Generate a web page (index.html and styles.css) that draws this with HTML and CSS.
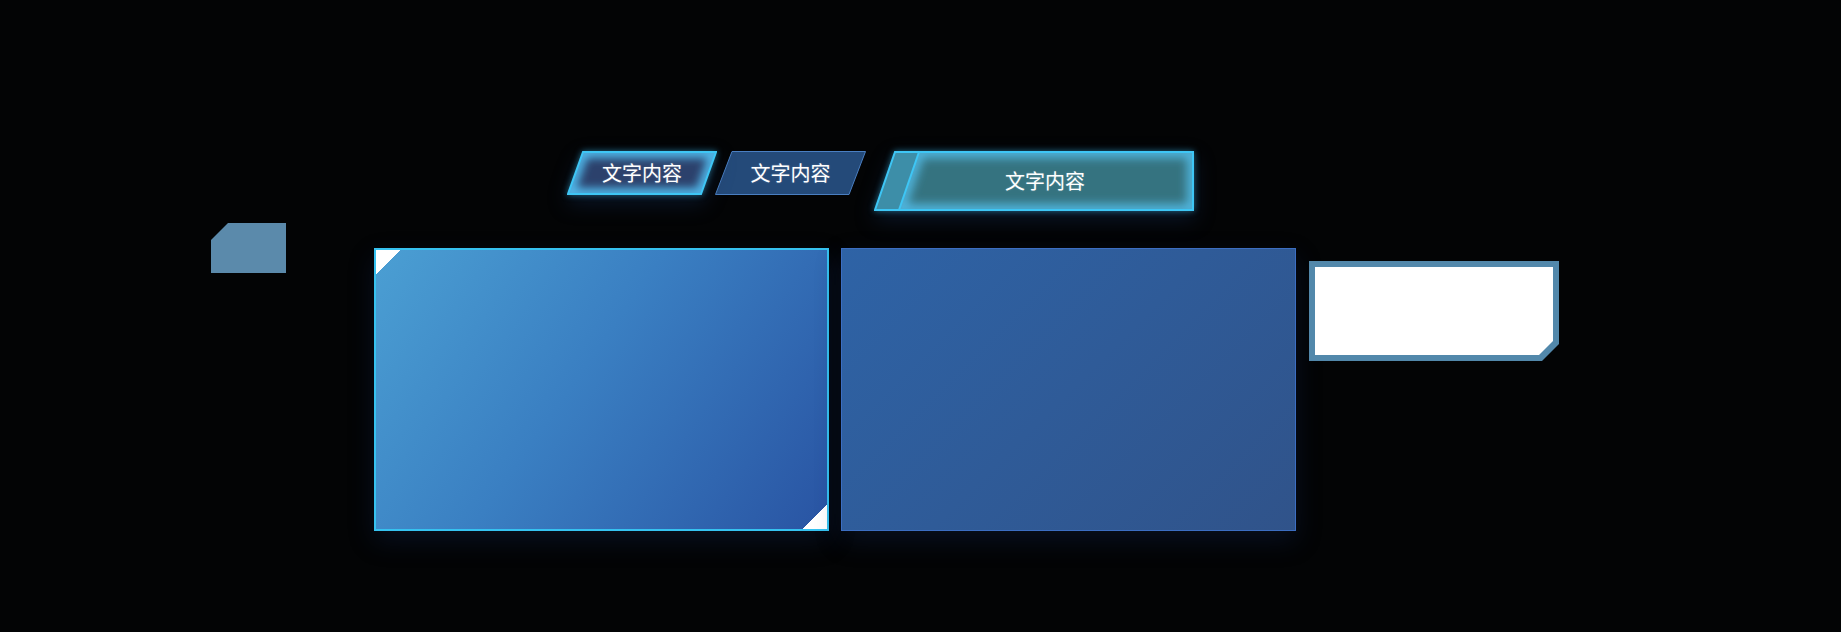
FILE: index.html
```html
<!DOCTYPE html>
<html lang="zh">
<head>
<meta charset="utf-8">
<title>UI</title>
<link rel="stylesheet" href="styles.css">
</head>
<body>
<div class="page">
  <div class="tabs-row">
    <div class="tab tab-active">
      <svg class="tab-shape glow" width="150" height="44" viewBox="0 0 150 44">
        <defs>
          <clipPath id="clipT1"><polygon points="16,1 149,1 134,43 1,43"/></clipPath>
          <filter id="blurT1" x="-20%" y="-50%" width="140%" height="200%"><feGaussianBlur stdDeviation="4"/></filter>
        </defs>
        <polygon points="16,1 149,1 134,43 1,43" fill="#2c416c"/>
        <g clip-path="url(#clipT1)">
          <polygon points="16,1 149,1 134,43 1,43" fill="none" stroke="#4fb6e8" stroke-width="12" filter="url(#blurT1)"/>
        </g>
        <polygon points="16,1 149,1 134,43 1,43" fill="none" stroke="#3ec6f5" stroke-width="2"/>
      </svg>
      <span class="tab-text">文字内容</span>
    </div>
    <div class="tab tab-plain">
      <svg class="tab-shape" width="151" height="44" viewBox="0 0 151 44">
        <polygon points="17,0.5 150.5,0.5 134,43.5 0.5,43.5" fill="#244a79" stroke="#4a7fc2" stroke-width="1"/>
      </svg>
      <span class="tab-text">文字内容</span>
    </div>
    <div class="tab tab-big">
      <svg class="tab-shape glow" width="320" height="60" viewBox="0 0 320 60">
        <defs>
          <clipPath id="clipBig"><polygon points="45,1 319,1 319,59 25,59"/></clipPath>
          <filter id="blurBig" x="-20%" y="-50%" width="140%" height="200%"><feGaussianBlur stdDeviation="5"/></filter>
        </defs>
        <polygon points="21,1 45,1 25,59 1,59" fill="#3d8ea8"/>
        <polygon points="45,1 319,1 319,59 25,59" fill="#357380"/>
        <g clip-path="url(#clipBig)">
          <polygon points="45,1 319,1 319,59 25,59" fill="none" stroke="#4fb4dc" stroke-width="12" filter="url(#blurBig)"/>
        </g>
        <line x1="45" y1="1" x2="25" y2="59" stroke="#3ec6f5" stroke-width="2"/>
        <polygon points="21,1 319,1 319,59 1,59" fill="none" stroke="#3ec6f5" stroke-width="2"/>
      </svg>
      <span class="tab-text big-text">文字内容</span>
    </div>
  </div>

  <div class="cards-row">
    <div class="chip"></div>
    <div class="card card-primary"></div>
    <div class="card card-secondary"></div>
    <div class="frame">
      <div class="frame-inner"></div>
    </div>
  </div>
</div>
</body>
</html>
```
FILE: styles.css
```css
html, body {
  margin: 0;
  padding: 0;
  background: #030405;
}

body {
  width: 1841px;
  height: 632px;
  overflow: hidden;
  font-family: "Noto Sans CJK SC", "Noto Sans", sans-serif;
}

.page {
  display: flex;
  flex-direction: column;
  padding-top: 151px;
}

.tabs-row {
  display: flex;
  align-items: flex-start;
  margin-left: 567px;
}

.tab {
  display: grid;
  place-items: center;
}

.tab > * {
  grid-area: 1 / 1;
}

.tab-plain {
  margin-left: -2px;
}

.tab-big {
  margin-left: 8px;
}

.tab-shape {
  display: block;
}

.tab-shape.glow {
  filter: drop-shadow(0 0 3px rgba(62, 198, 245, 0.5)) drop-shadow(0 8px 10px rgba(20, 45, 90, 0.4));
}

.tab-text {
  position: relative;
  z-index: 1;
  color: #ffffff;
  font-size: 20px;
  line-height: 24px;
  letter-spacing: 0;
  text-shadow: 0 0 2px rgba(255, 255, 255, 0.25);
}

.big-text {
  padding-left: 22px;
}

.cards-row {
  display: flex;
  align-items: flex-start;
  margin-top: 12px;
  margin-left: 211px;
}

.chip {
  width: 75px;
  height: 50px;
  background: #5b8aab;
  clip-path: polygon(17px 0, 100% 0, 100% 100%, 0 100%, 0 17px);
}

.card {
  box-sizing: border-box;
  width: 455px;
  height: 283px;
  margin-top: 25px;
  box-shadow: 0 10px 24px rgba(20, 40, 90, 0.3);
}

.card-primary {
  margin-left: 88px;
  border: 2px solid #36c2f0;
  background:
    linear-gradient(135deg, #ffffff 17px, transparent 17.5px),
    linear-gradient(315deg, #ffffff 17px, transparent 17.5px),
    linear-gradient(125deg, #4b9fd3 0%, #3a7fc2 45%, #2954a3 100%);
}

.card-secondary {
  margin-left: 12px;
  border: 1px solid #3c6ec2;
  background: linear-gradient(135deg, #2e63a6 0%, #2f5b98 50%, #30538a 100%);
}

.frame {
  box-sizing: border-box;
  width: 250px;
  height: 100px;
  margin-top: 38px;
  margin-left: 13px;
  padding: 6px;
  background: #5288ab;
  clip-path: polygon(0 0, 100% 0, 100% calc(100% - 17px), calc(100% - 17px) 100%, 0 100%);
}

.frame-inner {
  width: 100%;
  height: 100%;
  background: #ffffff;
  clip-path: polygon(0 0, 100% 0, 100% calc(100% - 14px), calc(100% - 14px) 100%, 0 100%);
}
```
